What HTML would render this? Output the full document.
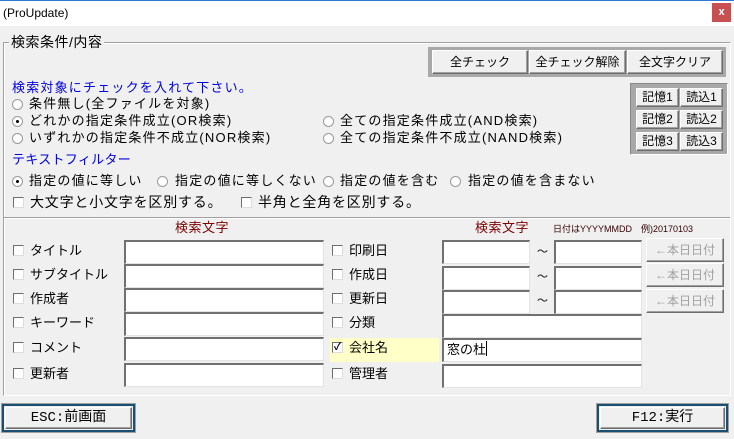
<!DOCTYPE html>
<html><head><meta charset="utf-8"><style>
*{margin:0;padding:0;box-sizing:border-box}
body{width:734px;height:439px;background:#f0f0f0;position:relative;overflow:hidden;font-family:"Liberation Sans","Noto Sans CJK JP",sans-serif;font-size:13px;color:#000}
.a{position:absolute;white-space:nowrap;line-height:16px}
.ls{letter-spacing:1.2px}
.in{position:absolute;background:#fff;border-top:2px solid #707070;border-left:2px solid #707070;border-right:1px solid #e3e3e3;border-bottom:1px solid #e3e3e3}
.btn{position:absolute;background:#f0f0f0;border:1px solid;border-color:#fff #6d6d6d #6d6d6d #fff;box-shadow:inset -1px -1px 0 #a0a0a0;text-align:center;font-size:12px}
.cb{position:absolute;width:11px;height:11px;background:#fff;border:1px solid #6d6d6d;border-right-color:#ddd;border-bottom-color:#ddd}
.rd{position:absolute;width:11px;height:11px;border-radius:50%;background:#fff;border:1px solid #999}
.rd.on::after{content:"";position:absolute;left:3px;top:3px;width:3px;height:3px;border-radius:50%;background:#000}
.blue{color:#0000e0}
.dr{color:#800000}
.lb{font-size:13px}
</style></head><body>
<div style="position:absolute;left:0;top:0;width:734px;height:26px;background:#fff;border-top:1px solid #2b79d0"></div>
<div class="a" style="left:3px;top:5px;font-size:12px">(ProUpdate)</div>
<div style="position:absolute;left:712px;top:3px;width:19px;height:19px;background:#c75050;color:#fff;font-size:11px;text-align:center;line-height:18px;font-weight:bold">x</div>

<div style="position:absolute;left:3px;top:42px;width:728px;height:354px;border:1px solid #a0a0a0;border-right-color:#fff;border-bottom-color:#fff;box-shadow:1px 1px 0 #fff inset"></div>
<div class="a" style="left:9px;top:34px;background:#f0f0f0;padding:0 2px;font-size:14px;letter-spacing:0.5px">検索条件/内容</div>

<div style="position:absolute;left:428px;top:47px;width:298px;height:30px;background:#a8a8a8"></div>
<div class="btn" style="left:432px;top:50px;width:96px;height:24px;line-height:22px">全チェック</div>
<div class="btn" style="left:529px;top:50px;width:97px;height:24px;line-height:22px">全チェック解除</div>
<div class="btn" style="left:627px;top:50px;width:96px;height:24px;line-height:22px">全文字クリア</div>

<div style="position:absolute;left:630px;top:83px;width:98px;height:72px;background:#a8a8a8;border:1px solid #fff;border-top-color:#888;border-left-color:#888"></div>
<div class="btn" style="left:636px;top:88px;width:43px;height:19px;line-height:17px">記憶1</div>
<div class="btn" style="left:680px;top:88px;width:43px;height:19px;line-height:17px">読込1</div>
<div class="btn" style="left:636px;top:110px;width:43px;height:19px;line-height:17px">記憶2</div>
<div class="btn" style="left:680px;top:110px;width:43px;height:19px;line-height:17px">読込2</div>
<div class="btn" style="left:636px;top:132px;width:43px;height:19px;line-height:17px">記憶3</div>
<div class="btn" style="left:680px;top:132px;width:43px;height:19px;line-height:17px">読込3</div>

<div class="a blue ls" style="left:12px;top:80px">検索対象にチェックを入れて下さい。</div>
<div class="rd" style="left:12px;top:99px"></div><div class="a ls" style="left:29px;top:96px">条件無し(全ファイルを対象)</div>
<div class="rd on" style="left:12px;top:116px"></div><div class="a ls" style="left:29px;top:113px">どれかの指定条件成立(OR検索)</div>
<div class="rd" style="left:12px;top:133px"></div><div class="a ls" style="left:29px;top:130px">いずれかの指定条件不成立(NOR検索)</div>
<div class="rd" style="left:323px;top:116px"></div><div class="a ls" style="left:340px;top:113px">全ての指定条件成立(AND検索)</div>
<div class="rd" style="left:323px;top:133px"></div><div class="a ls" style="left:340px;top:130px">全ての指定条件不成立(NAND検索)</div>
<div class="a blue" style="left:12px;top:152px;letter-spacing:0.3px">テキストフィルター</div>
<div class="rd on" style="left:12px;top:176px"></div><div class="a ls" style="left:29px;top:173px">指定の値に等しい</div>
<div class="rd" style="left:157px;top:176px"></div><div class="a ls" style="left:175px;top:173px">指定の値に等しくない</div>
<div class="rd" style="left:323px;top:176px"></div><div class="a ls" style="left:340px;top:173px">指定の値を含む</div>
<div class="rd" style="left:450px;top:176px"></div><div class="a ls" style="left:468px;top:173px">指定の値を含まない</div>
<div class="cb" style="left:13px;top:197px"></div><div class="a" style="left:30px;top:194px;font-size:14px;letter-spacing:0.8px">大文字と小文字を区別する。</div>
<div class="cb" style="left:241px;top:197px"></div><div class="a" style="left:258px;top:194px;font-size:14px;letter-spacing:0.8px">半角と全角を区別する。</div>
<div style="position:absolute;left:4px;top:217px;width:726px;height:2px;border-top:1px solid #a0a0a0;border-bottom:1px solid #fff"></div>

<div class="a dr" style="left:175px;top:220px;letter-spacing:0.5px">検索文字</div>
<div class="a dr" style="left:475px;top:220px;letter-spacing:0.5px">検索文字</div>
<div class="a" style="left:553px;top:221px;font-size:9px;color:#300">日付はYYYYMMDD　例)20170103</div>

<div style="position:absolute;left:330px;top:338px;width:109px;height:24px;background:#ffffc8"></div>

<div class="cb" style="left:13px;top:245px"></div><div class="a lb" style="left:30px;top:243px">タイトル</div>
<div class="cb" style="left:13px;top:269px"></div><div class="a lb" style="left:30px;top:267px">サブタイトル</div>
<div class="cb" style="left:13px;top:293px"></div><div class="a lb" style="left:30px;top:291px">作成者</div>
<div class="cb" style="left:13px;top:317px"></div><div class="a lb" style="left:30px;top:315px">キーワード</div>
<div class="cb" style="left:13px;top:342px"></div><div class="a lb" style="left:30px;top:340px">コメント</div>
<div class="cb" style="left:13px;top:368px"></div><div class="a lb" style="left:30px;top:366px">更新者</div>

<div class="in" style="left:124px;top:240px;width:200px;height:24px"></div>
<div class="in" style="left:124px;top:264px;width:200px;height:24px"></div>
<div class="in" style="left:124px;top:288px;width:200px;height:24px"></div>
<div class="in" style="left:124px;top:312px;width:200px;height:24px"></div>
<div class="in" style="left:124px;top:337px;width:200px;height:24px"></div>
<div class="in" style="left:124px;top:363px;width:200px;height:24px"></div>

<div class="cb" style="left:332px;top:245px"></div><div class="a lb" style="left:349px;top:243px">印刷日</div>
<div class="cb" style="left:332px;top:269px"></div><div class="a lb" style="left:349px;top:267px">作成日</div>
<div class="cb" style="left:332px;top:293px"></div><div class="a lb" style="left:349px;top:291px">更新日</div>
<div class="cb" style="left:332px;top:317px"></div><div class="a lb" style="left:349px;top:315px">分類</div>
<div class="cb" style="left:332px;top:342px;font-size:10px;line-height:9px;text-align:center;font-weight:bold">✓</div><div class="a lb" style="left:349px;top:340px">会社名</div>
<div class="cb" style="left:332px;top:368px"></div><div class="a lb" style="left:349px;top:366px">管理者</div>

<div class="in" style="left:442px;top:240px;width:88px;height:24px"></div>
<div class="in" style="left:554px;top:240px;width:88px;height:24px"></div>
<div class="in" style="left:442px;top:266px;width:88px;height:24px"></div>
<div class="in" style="left:554px;top:266px;width:88px;height:24px"></div>
<div class="in" style="left:442px;top:290px;width:88px;height:24px"></div>
<div class="in" style="left:554px;top:290px;width:88px;height:24px"></div>
<div class="a" style="left:537px;top:244px;font-size:11px">～</div>
<div class="a" style="left:537px;top:269px;font-size:11px">～</div>
<div class="a" style="left:537px;top:293px;font-size:11px">～</div>
<div class="in" style="left:442px;top:314px;width:200px;height:24px"></div>
<div class="in" style="left:442px;top:338px;width:200px;height:24px"></div>
<div class="a" style="left:447px;top:341px;font-size:13px">窓の杜<span style="display:inline-block;width:1px;height:15px;background:#000;vertical-align:-2px"></span></div>
<div class="in" style="left:442px;top:364px;width:200px;height:24px"></div>

<div class="btn" style="left:646px;top:238px;width:78px;height:24px;line-height:22px;color:#a0a0a0">←本日日付</div>
<div class="btn" style="left:646px;top:263px;width:78px;height:24px;line-height:22px;color:#a0a0a0">←本日日付</div>
<div class="btn" style="left:646px;top:289px;width:78px;height:24px;line-height:22px;color:#a0a0a0">←本日日付</div>

<div style="position:absolute;left:2px;top:404px;width:133px;height:28px;border:2px solid #1b4f72;outline:1px solid #a0a0a0"></div>
<div class="btn" style="left:5px;top:407px;width:127px;height:22px;line-height:20px;font-size:14px;font-family:'Liberation Mono','Noto Sans CJK JP',monospace">ESC:前画面</div>
<div style="position:absolute;left:597px;top:404px;width:131px;height:28px;border:2px solid #1b4f72;outline:1px solid #a0a0a0"></div>
<div class="btn" style="left:600px;top:407px;width:125px;height:22px;line-height:20px;font-size:14px;font-family:'Liberation Mono','Noto Sans CJK JP',monospace">F12:実行</div>
</body></html>
